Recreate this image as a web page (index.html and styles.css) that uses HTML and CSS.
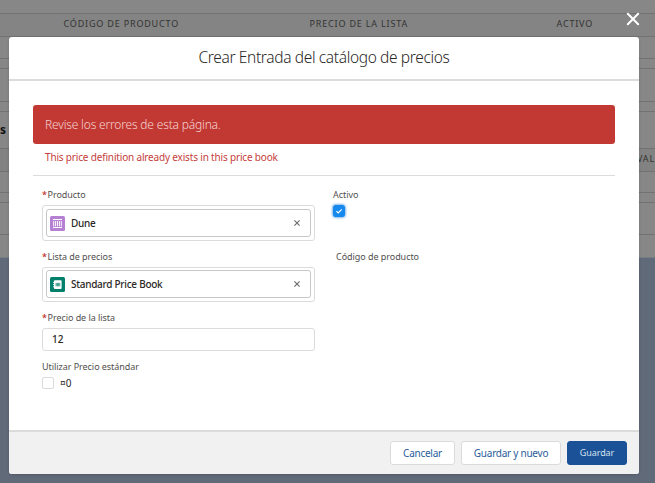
FILE: index.html
```html
<!DOCTYPE html>
<html lang="es">
<head>
<meta charset="utf-8">
<title>Crear Entrada del catálogo de precios</title>
<link rel="stylesheet" href="styles.css">
</head>
<body>
<div class="page">
  <div class="row r-top"></div>
  <div class="row r-head"><span>CÓDIGO DE PRODUCTO</span><span>PRECIO DE LA LISTA</span><span>ACTIVO</span></div>
  <div class="row r-22"></div>
  <div class="row r-10"></div>
  <div class="row r-33"></div>
  <div class="row r-10"></div>
  <div class="row r-section"><b>s</b></div>
  <div class="row r-cols"><span>VAL</span></div>
  <div class="row r-21"></div>
  <div class="row r-10"></div>
  <div class="row r-32"></div>
  <div class="row r-last"></div>
</div>
<svg class="close" viewBox="0 0 14 14"><path d="M1.8 1.8l10.4 10.4M12.2 1.8L1.8 12.2"/></svg>
<section class="modal">
  <header class="head"><h1>Crear Entrada del catálogo de precios</h1></header>
  <main class="body">
    <div class="alert"><span>Revise los errores de esta página.</span></div>
    <div class="error"><span>This price definition already exists in this price book</span></div>
    <div class="form">
      <div class="left">
        <label class="label"><i>*</i><span>Producto</span></label>
        <div class="lookup">
          <div class="pill">
            <svg class="ico" viewBox="0 0 15 15"><rect width="15" height="15" rx="1.5" fill="#b781d3"/><path d="M3 3.5h9M3 11.5h9" stroke="#fff" stroke-width="1"/><path d="M3.7 5v5.3M5.6 5v5.3M7.5 5v5.3M9.4 5v5.3M11.3 5v5.3" stroke="#fff" stroke-width=".95"/></svg>
            <span>Dune</span>
            <svg class="x" viewBox="0 0 6 6"><path d="M.4.4l5.2 5.2M5.6.4L.4 5.6"/></svg>
          </div>
        </div>
        <label class="label l2"><i>*</i><span>Lista de precios</span></label>
        <div class="lookup lk2">
          <div class="pill">
            <svg class="ico" viewBox="0 0 15 15"><rect width="15" height="15" rx="1.5" fill="#03806c"/><rect x="4" y="3.2" width="7.6" height="8.8" rx=".8" fill="#fff"/><path d="M3 5.4h2M3 7.6h2M3 9.8h2" stroke="#fff" stroke-width=".9"/><rect x="5.5" y="5.8" width="4.8" height="3.6" fill="#6db5a8"/><circle cx="7.9" cy="7.6" r="1" fill="#2b9482"/></svg>
            <span>Standard Price Book</span>
            <svg class="x" viewBox="0 0 6 6"><path d="M.4.4l5.2 5.2M5.6.4L.4 5.6"/></svg>
          </div>
        </div>
        <label class="label l3"><i>*</i><span>Precio de la lista</span></label>
        <div class="input">12</div>
        <label class="label l4"><span>Utilizar Precio estándar</span></label>
        <div class="check"><span class="box"></span><span>¤0</span></div>
      </div>
      <div class="right">
        <label class="label"><span>Activo</span></label>
        <svg class="checked" viewBox="0 0 12 12"><rect width="12" height="12" rx="1.5"/><path d="M3.4 6.1l1.8 1.7 3.5-3.5"/></svg>
        <label class="label code"><span>Código de producto</span></label>
      </div>
    </div>
  </main>
  <footer class="foot">
    <button class="btn b1"><span>Cancelar</span></button>
    <button class="btn b2"><span>Guardar y nuevo</span></button>
    <button class="btn b3"><span>Guardar</span></button>
  </footer>
</section>
</body>
</html>
```
FILE: styles.css
```css
* { box-sizing: border-box; }
body {
  margin: 0;
  width: 655px;
  height: 483px;
  overflow: hidden;
  position: relative;
  background: #606a79;
  color: #2b2826;
  font-family: "Noto Sans", "Open Sans", sans-serif;
}
svg { display: block; flex: none; }
span { white-space: nowrap; }

.page { font-size: 9px; color: #333; letter-spacing: .82px; }
.row { background: #878787; border-bottom: 1px solid #727272; }
.r-top { height: 14px; }
.r-head {
  height: 23px;
  display: grid;
  grid-template-columns: 246px 247px 1fr;
  padding-left: 63.5px;
  line-height: 20px;
  background: #848484;
}
.r-22 { height: 22px; }
.r-10 { height: 10px; }
.r-33 { height: 33px; }
.r-section { height: 37px; line-height: 36px; color: #111; font-size: 12px; }
.r-cols { height: 23px; line-height: 19px; padding-left: 637px; background: #828282; }
.r-21 { height: 21px; }
.r-32 { height: 32px; }
.r-last { height: 23px; border-bottom-color: #777d84; }

.close {
  position: absolute;
  left: 626px;
  top: 12px;
  width: 14px;
  height: 14px;
  fill: none;
  stroke: #fff;
  stroke-width: 2;
  stroke-linecap: round;
}
.modal {
  position: absolute;
  left: 9px;
  top: 37px;
  width: 630px;
  height: 437px;
  display: flex;
  flex-direction: column;
  background: #fff;
  border-radius: 3px;
  overflow: hidden;
  box-shadow: 0 1px 3px rgba(0, 0, 0, .16);
}
.head { height: 44px; border-bottom: 2px solid #dddbda; text-align: center; }
h1 { margin: 0; font-size: 15.5px; font-weight: 300; line-height: 41px; letter-spacing: -.36px; }
.body { flex: 1; padding: 24px 24px 0; }
.alert {
  height: 39px;
  padding-left: 12px;
  border-radius: 3px;
  background: #c23934;
  color: #f4d4d2;
  font-size: 12px;
  font-weight: 300;
  line-height: 39px;
  letter-spacing: -.18px;
}
.error {
  height: 32px;
  padding-left: 12px;
  border-bottom: 1px solid #dddbda;
  color: #c5403b;
  font-size: 10px;
  line-height: 26px;
  letter-spacing: -.17px;
}
.form { display: flex; padding: 12px 0 0 9px; }
.left { width: 273px; margin-right: 18px; }
.label { display: flex; height: 14px; font-size: 9px; line-height: 14px; color: #514f4d; letter-spacing: -.05px; }
.label i { width: 5.5px; color: #c23934; font-style: normal; font-weight: 600; }
.lookup { height: 36px; margin-top: 3px; padding: 3px; border: 1px solid #dddbda; border-radius: 3px; }
.pill {
  height: 28px;
  display: flex;
  align-items: center;
  padding: 0 10px 0 3px;
  border: 1px solid #c9c7c5;
  border-radius: 3px;
  font-size: 10px;
  font-weight: 500;
  letter-spacing: -.28px;
}
.ico { width: 15px; height: 15px; margin-right: 6px; }
.x { width: 6px; height: 6px; margin-left: auto; fill: none; stroke: #6b6967; stroke-width: 1.1; }
.l2 { margin-top: 9px; }
.lk2 { height: 35px; padding-top: 2px; }
.l3 { margin-top: 9px; }
.input {
  height: 23px;
  margin-top: 3px;
  padding-left: 9px;
  border: 1px solid #dddbda;
  border-radius: 3px;
  font-size: 10px;
  font-weight: 500;
  line-height: 20px;
}
.l4 { margin-top: 9px; }
.check { display: flex; align-items: center; height: 13px; margin-top: 2px; font-size: 10px; }
.box { width: 12px; height: 12px; margin-right: 6px; border: 1px solid #dddbda; border-radius: 2px; }
.checked { width: 12px; height: 12px; margin-top: 3px; border-radius: 2px; box-shadow: 0 0 3px #0070d2; }
.checked rect { fill: #1589ee; }
.checked path { fill: none; stroke: #fff; stroke-width: 1.2; }
.code { margin: 33px 0 0 3px; }

.foot {
  height: 44px;
  display: flex;
  justify-content: flex-end;
  padding: 9px 12px 0 0;
  gap: 6px;
  border-top: 2px solid #dddbda;
  background: #f1f1f1;
}
.btn {
  height: 24px;
  padding: 0;
  border: 1px solid #dddbda;
  border-radius: 3px;
  background: #fff;
  color: #2a5d9b;
  font: 10px/22px "Noto Sans", "Open Sans", sans-serif;
  letter-spacing: -.25px;
}
.b1 { width: 65px; }
.b2 { width: 100px; }
.b3 { width: 60px; border-color: #1b5297; background: #1b5297; color: #d5e0ed; font-size: 9px; letter-spacing: -.1px; }
```
